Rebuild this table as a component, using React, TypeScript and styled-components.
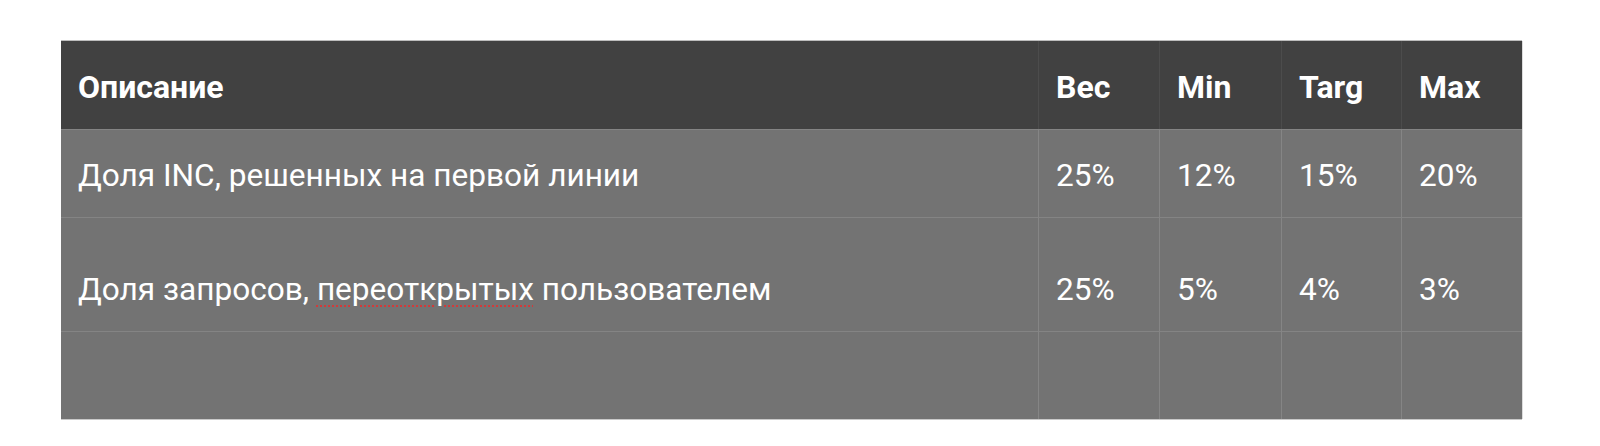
import { Fragment, type ReactNode } from "react";
import styled, { createGlobalStyle } from "styled-components";

const GlobalStyle = createGlobalStyle`
  html, body {
    margin: 0;
    padding: 0;
    background: #ffffff;
  }
  body {
    font-family: Roboto, "Noto Sans", "Liberation Sans", sans-serif;
  }
`;

const Page = styled.div`
  width: 1600px;
  height: 446px;
  padding: 41px 0 0 61px;
  box-sizing: border-box;
`;

const Table = styled.div`
  display: grid;
  grid-template-columns: 977px 121px 122px 120px 121px;
  width: 1461px;
  box-shadow: 0 1px 0 #c9c9c9, 1px 0 0 #dcdcdc, 0 -1px 0 #bdbdbd;
`;

const HeadCell = styled.div<{ $first?: boolean }>`
  height: 88px;
  box-sizing: border-box;
  display: flex;
  align-items: center;
  padding: 3px 17px 0;
  background: #414141;
  border-left: ${(p) => (p.$first ? "none" : "1px solid #4c4c4c")};
  color: #ffffff;
  font-size: 32px;
  font-weight: 700;
`;

const Cell = styled.div<{ $first?: boolean; $tall?: boolean }>`
  height: ${(p) => (p.$tall ? "114px" : "88px")};
  box-sizing: border-box;
  display: flex;
  align-items: center;
  padding: ${(p) => (p.$tall ? "29px" : "4px")} 17px 0;
  background: #737373;
  border-top: 1px solid #848484;
  border-left: ${(p) => (p.$first ? "none" : "1px solid #858585")};
  color: #ffffff;
  font-size: 31.6px;
  font-weight: 400;
  white-space: nowrap;
`;

const Misspelled = styled.span`
  text-decoration: underline dotted #d23a3a;
  text-decoration-thickness: 2px;
  text-underline-offset: 6px;
`;

const headers = ["Описание", "Вес", "Min", "Targ", "Max"];

const rows: { desc: ReactNode; values: string[]; tall?: boolean }[] = [
  { desc: "Доля INC, решенных на первой линии", values: ["25%", "12%", "15%", "20%"] },
  {
    desc: (
      <span>
        Доля запросов, <Misspelled>переоткрытых</Misspelled> пользователем
      </span>
    ),
    values: ["25%", "5%", "4%", "3%"],
    tall: true,
  },
  { desc: "", values: ["", "", "", ""] },
];

export default function App() {
  return (
    <>
      <GlobalStyle />
      <Page>
        <Table>
          {headers.map((h, i) => (
            <HeadCell key={h} $first={i === 0}>
              {h}
            </HeadCell>
          ))}
          {rows.map((r, ri) => (
            <Fragment key={ri}>
              <Cell $first $tall={r.tall}>
                {r.desc}
              </Cell>
              {r.values.map((v, vi) => (
                <Cell key={vi} $tall={r.tall}>
                  {v}
                </Cell>
              ))}
            </Fragment>
          ))}
        </Table>
      </Page>
    </>
  );
}
